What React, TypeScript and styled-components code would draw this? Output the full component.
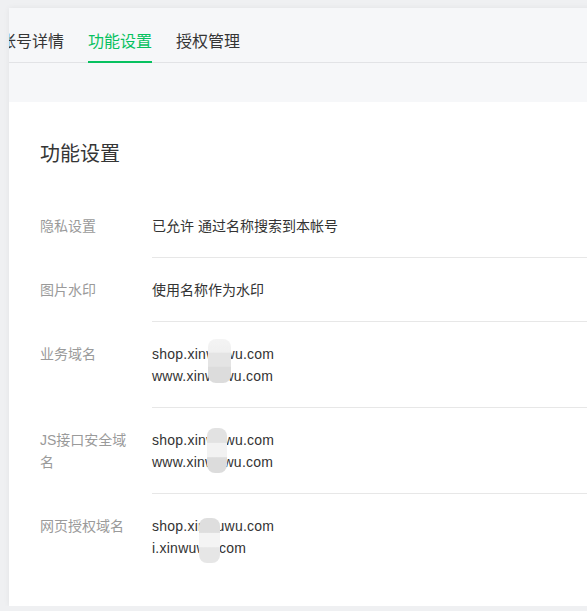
import React from "react";
import styled, { createGlobalStyle } from "styled-components";

const Global = createGlobalStyle`
  html, body { margin: 0; padding: 0; overflow: hidden; }
  body {
    background: #eff0f2;
    font-family: "Liberation Sans", "Noto Sans CJK SC", sans-serif;
    -webkit-font-smoothing: antialiased;
  }
`;

const Panel = styled.div`
  margin: 8px -20px 0 9px;
  height: 598px;
  background: #f6f7f9;
  box-shadow: 0 0 6px rgba(0, 0, 0, 0.06);
  overflow: hidden;
  display: flex;
  flex-direction: column;
`;

const TabBar = styled.div`
  display: flex;
  gap: 24px;
  margin-left: -9px;
  padding-left: 0;
  border-bottom: 1px solid #e2e3e6;
`;

const Tab = styled.div<{ $active?: boolean }>`
  font-size: 16px;
  line-height: 22px;
  padding: 23px 0 8px;
  margin-bottom: -1px;
  color: ${(p) => (p.$active ? "#07c160" : "#353535")};
  border-bottom: 2px solid ${(p) => (p.$active ? "#07c160" : "transparent")};
  white-space: nowrap;
`;

const Card = styled.div`
  margin-top: 39px;
  background: #ffffff;
  padding: 38px 0 28px 31px;
  flex: 1;
`;

const Title = styled.h2`
  margin: 0 0 26px;
  font-size: 20px;
  line-height: 28px;
  font-weight: normal;
  color: #353535;
`;

const Row = styled.div`
  display: flex;
  align-items: stretch;
`;

const Label = styled.div`
  width: 92px;
  padding: 21px 20px 20px 0;
  flex: none;
  font-size: 14px;
  line-height: 22px;
  color: #9a9a9a;
`;

const Value = styled.div<{ $last?: boolean }>`
  flex: 1;
  padding: 21px 0 20px;
  font-size: 14px;
  line-height: 22px;
  color: #333333;
  border-bottom: 1px solid ${(p) => (p.$last ? "transparent" : "#e7e7e7")};
`;

const Lines = styled.div`
  position: relative;
  display: inline-block;
`;

const Line = styled.div<{ $latin?: boolean }>`
  white-space: nowrap;
  letter-spacing: ${(p) => (p.$latin ? "0.25px" : "0")};
`;

const Blob = styled.div<{ $bg: string }>`
  position: absolute;
  border-radius: 8px;
  background: ${(p) => p.$bg};
  filter: blur(0.6px);
`;

type BlobSpec = { left: number; top: number; width: number; height: number; bg: string };

const rows: { label: string; lines: string[]; latin?: boolean; blob?: BlobSpec }[] = [
  { label: "隐私设置", lines: ["已允许 通过名称搜索到本帐号"] },
  { label: "图片水印", lines: ["使用名称作为水印"] },
  {
    label: "业务域名",
    lines: ["shop.xinwuwu.com", "www.xinwuwu.com"],
    latin: true,
    blob: {
      left: 56,
      top: -4,
      width: 23,
      height: 44,
      bg: "linear-gradient(#f4f4f4 0%, #f0f0f0 30%, #e4e4e4 32%, #e4e4e4 62%, #dcdcdc 64%, #dcdcdc 100%)",
    },
  },
  {
    label: "JS接口安全域名",
    lines: ["shop.xinwuwu.com", "www.xinwuwu.com"],
    latin: true,
    blob: {
      left: 55,
      top: -1,
      width: 20,
      height: 45,
      bg: "linear-gradient(#e2e2e2 0%, #e2e2e2 32%, #f2f2f2 34%, #f2f2f2 64%, #dcdcdc 66%, #dcdcdc 100%)",
    },
  },
  {
    label: "网页授权域名",
    lines: ["shop.xinwuwu.com", "i.xinwuwu.com"],
    latin: true,
    blob: {
      left: 47,
      top: 3,
      width: 21,
      height: 45,
      bg: "linear-gradient(#dedede 0%, #dedede 32%, #f4f4f4 34%, #f4f4f4 64%, #e6e6e6 66%, #e6e6e6 100%)",
    },
  },
];

export default function App() {
  return (
    <>
      <Global />
      <Panel>
        <TabBar>
          <Tab>帐号详情</Tab>
          <Tab $active>功能设置</Tab>
          <Tab>授权管理</Tab>
        </TabBar>
        <Card>
          <Title>功能设置</Title>
          {rows.map((r, i) => (
            <Row key={r.label}>
              <Label>{r.label}</Label>
              <Value $last={i === rows.length - 1}>
                <Lines>
                  {r.lines.map((l) => (
                    <Line key={l} $latin={r.latin}>
                      {l}
                    </Line>
                  ))}
                  {r.blob && (
                    <Blob
                      $bg={r.blob.bg}
                      style={{
                        left: r.blob.left,
                        top: r.blob.top,
                        width: r.blob.width,
                        height: r.blob.height,
                      }}
                    />
                  )}
                </Lines>
              </Value>
            </Row>
          ))}
        </Card>
      </Panel>
    </>
  );
}
